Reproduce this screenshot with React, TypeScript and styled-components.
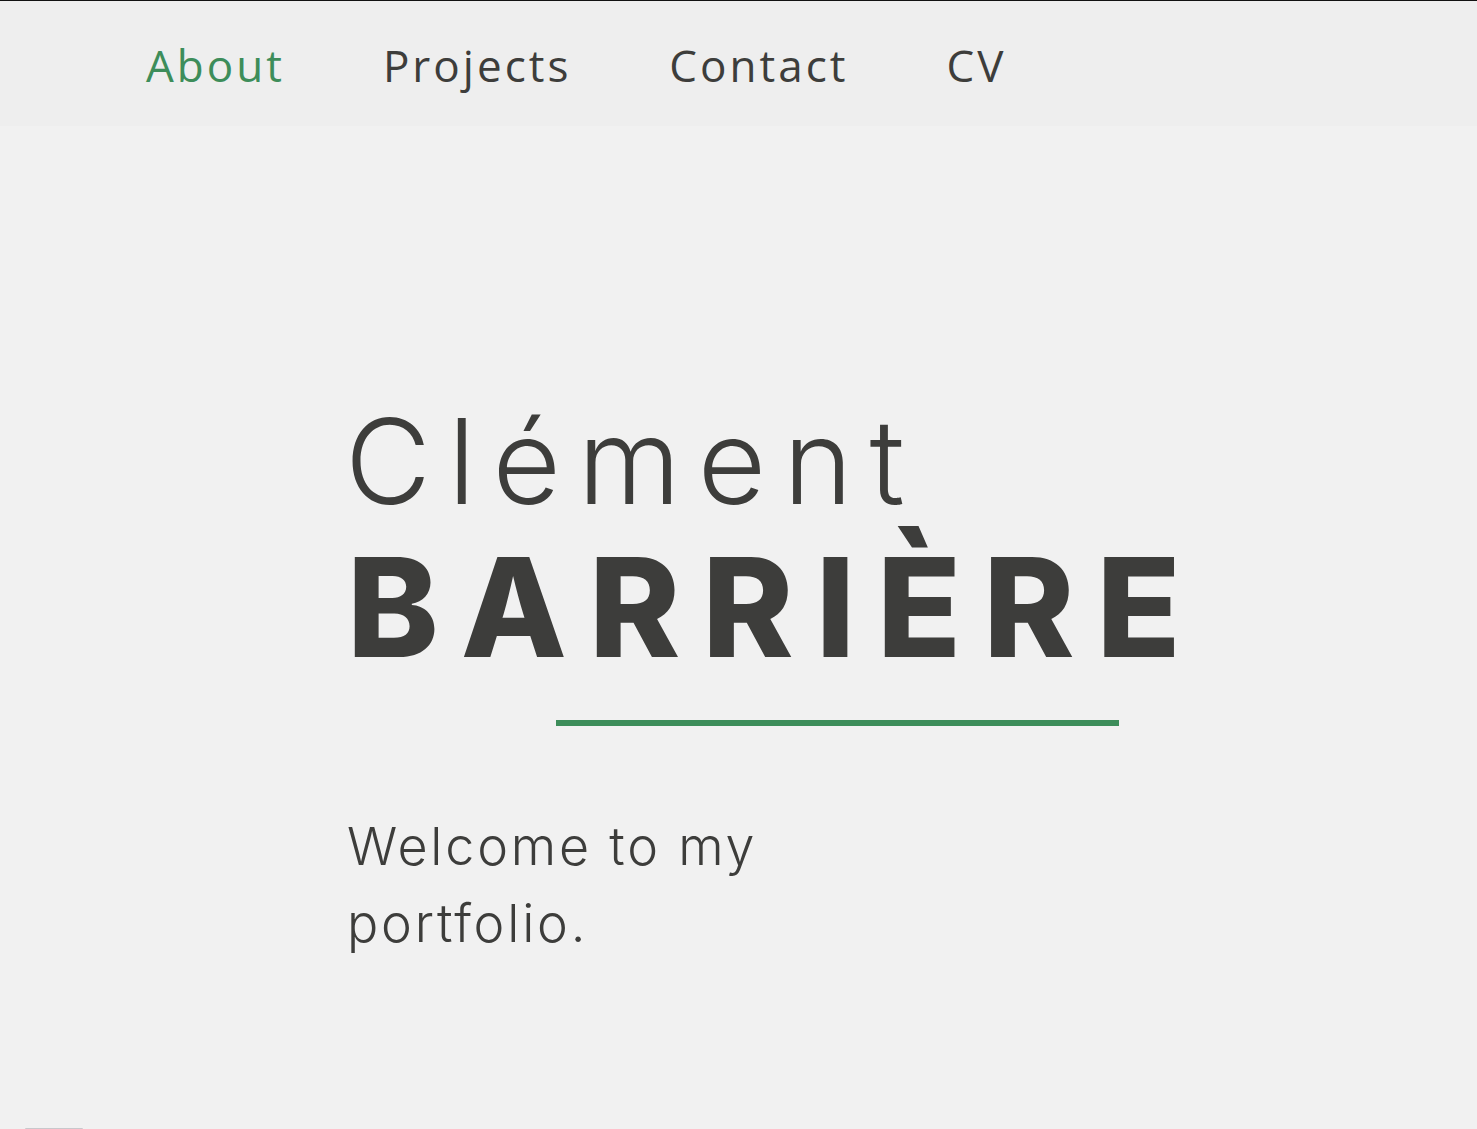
import React from "react";
import styled, { createGlobalStyle } from "styled-components";

const GlobalStyle = createGlobalStyle`
  html, body {
    margin: 0;
    padding: 0;
    background: #f1f1f1;
  }
  body {
    font-family: "Inter", "Liberation Sans", sans-serif;
    color: #3d3d3b;
  }
`;

const Page = styled.div`
  min-height: 1129px;
  border-top: 1px solid #111;
  box-sizing: border-box;
  display: flex;
  flex-direction: column;
`;

const NavBar = styled.nav`
  height: 125px;
  background: #eeeeee;
  display: flex;
  align-items: center;
  padding-left: 146px;
  gap: 98px;
`;

const NavLink = styled.a<{ active?: boolean }>`
  font-family: "Open Sans", "Liberation Sans", sans-serif;
  font-size: 44px;
  letter-spacing: 3px;
  color: ${(props) => (props.active ? "#3d8d5a" : "#3d3d3b")};
  text-decoration: none;
  cursor: pointer;
  margin-top: 2px;
`;

const Hero = styled.section`
  flex: 1;
  padding: 276px 0 0 345px;
`;

const FirstName = styled.h1`
  margin: 0;
  font-size: 118px;
  line-height: 118px;
  font-weight: 300;
  letter-spacing: 17px;
`;

const LastName = styled.h2`
  margin: 18px 0 0 2px;
  font-size: 138px;
  line-height: 138px;
  font-weight: 800;
  letter-spacing: 22px;
`;

const Divider = styled.hr`
  border: none;
  margin: 44px 0 0 211px;
  width: 563px;
  height: 6px;
  background: #3d8d5a;
`;

const Welcome = styled.p`
  margin: 82px 0 0 2px;
  max-width: 460px;
  font-size: 52px;
  line-height: 77px;
  font-weight: 300;
  letter-spacing: 2.8px;
`;

const Footer = styled.div`
  height: 1px;
  padding-left: 25px;
`;

const Tab = styled.div`
  width: 58px;
  height: 1px;
  border-radius: 4px 4px 0 0;
  background: #c8c8cc;
`;

export default function App() {
  const links = ["About", "Projects", "Contact", "CV"];
  return (
    <>
      <GlobalStyle />
      <Page>
        <NavBar>
          {links.map((link, i) => (
            <NavLink key={link} active={i === 0}>
              {link}
            </NavLink>
          ))}
        </NavBar>
        <Hero>
          <FirstName>Clément</FirstName>
          <LastName>BARRIÈRE</LastName>
          <Divider />
          <Welcome>Welcome to my portfolio.</Welcome>
        </Hero>
        <Footer>
          <Tab />
        </Footer>
      </Page>
    </>
  );
}
